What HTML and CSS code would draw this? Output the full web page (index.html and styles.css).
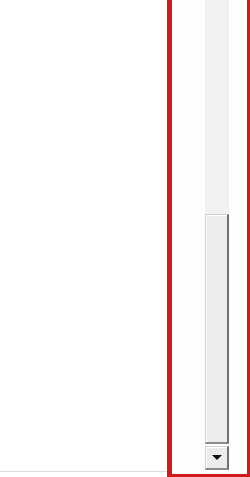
FILE: index.html
```html
<!DOCTYPE html>
<html lang="en">
<head>
    <meta charset="UTF-8">
    <meta name="viewport" content="width=device-width, initial-scale=1.0">
    <title>List</title>
    <link rel="stylesheet" href="styles.css">
</head>
<body>
    <div class="page">
        <div class="left">
            <div class="left-area"></div>
        </div>
        <div class="panel">
            <div class="scrollbar">
                <div class="track"></div>
                <div class="thumb"></div>
                <div class="arrow-btn"><span class="arrow"></span></div>
            </div>
        </div>
    </div>
</body>
</html>
```
FILE: styles.css
```css
* {
    box-sizing: border-box;
    margin: 0;
    padding: 0;
}

body {
    background: #fff;
    font-family: 'Liberation Sans', Arial, sans-serif;
}

.page {
    display: flex;
    width: 250px;
    height: 477px;
}

.left {
    flex: 0 0 167px;
}

.left-area {
    height: 472px;
    border-bottom: 1px solid #dcdcdc;
}

.panel {
    flex: 1;
    height: 477px;
    background: #fdfdfd;
    border-left: 5px solid #d11a1a;
    border-right: 3px solid #d11a1a;
    border-bottom: 3px solid #d11a1a;
    padding-left: 33px;
}

.scrollbar {
    width: 24px;
    display: flex;
    flex-direction: column;
}

.track {
    height: 214px;
    background: #f1f1f1;
}

.thumb {
    height: 230px;
    background: #ececec;
    border: 1px solid #cfcfcf;
    border-right: 2px solid #6e6e6e;
    border-bottom: 2px solid #8a8a8a;
    box-shadow: inset 1px 1px 0 #fff;
}

.arrow-btn {
    margin-top: 2px;
    height: 24px;
    background: #ececec;
    border: 1px solid #cfcfcf;
    border-right: 2px solid #6e6e6e;
    border-bottom: 2px solid #8a8a8a;
    box-shadow: inset 1px 1px 0 #fff;
    display: flex;
    align-items: center;
    justify-content: center;
}

.arrow {
    width: 0;
    height: 0;
    border-left: 5px solid transparent;
    border-right: 5px solid transparent;
    border-top: 5px solid #111;
}
```
